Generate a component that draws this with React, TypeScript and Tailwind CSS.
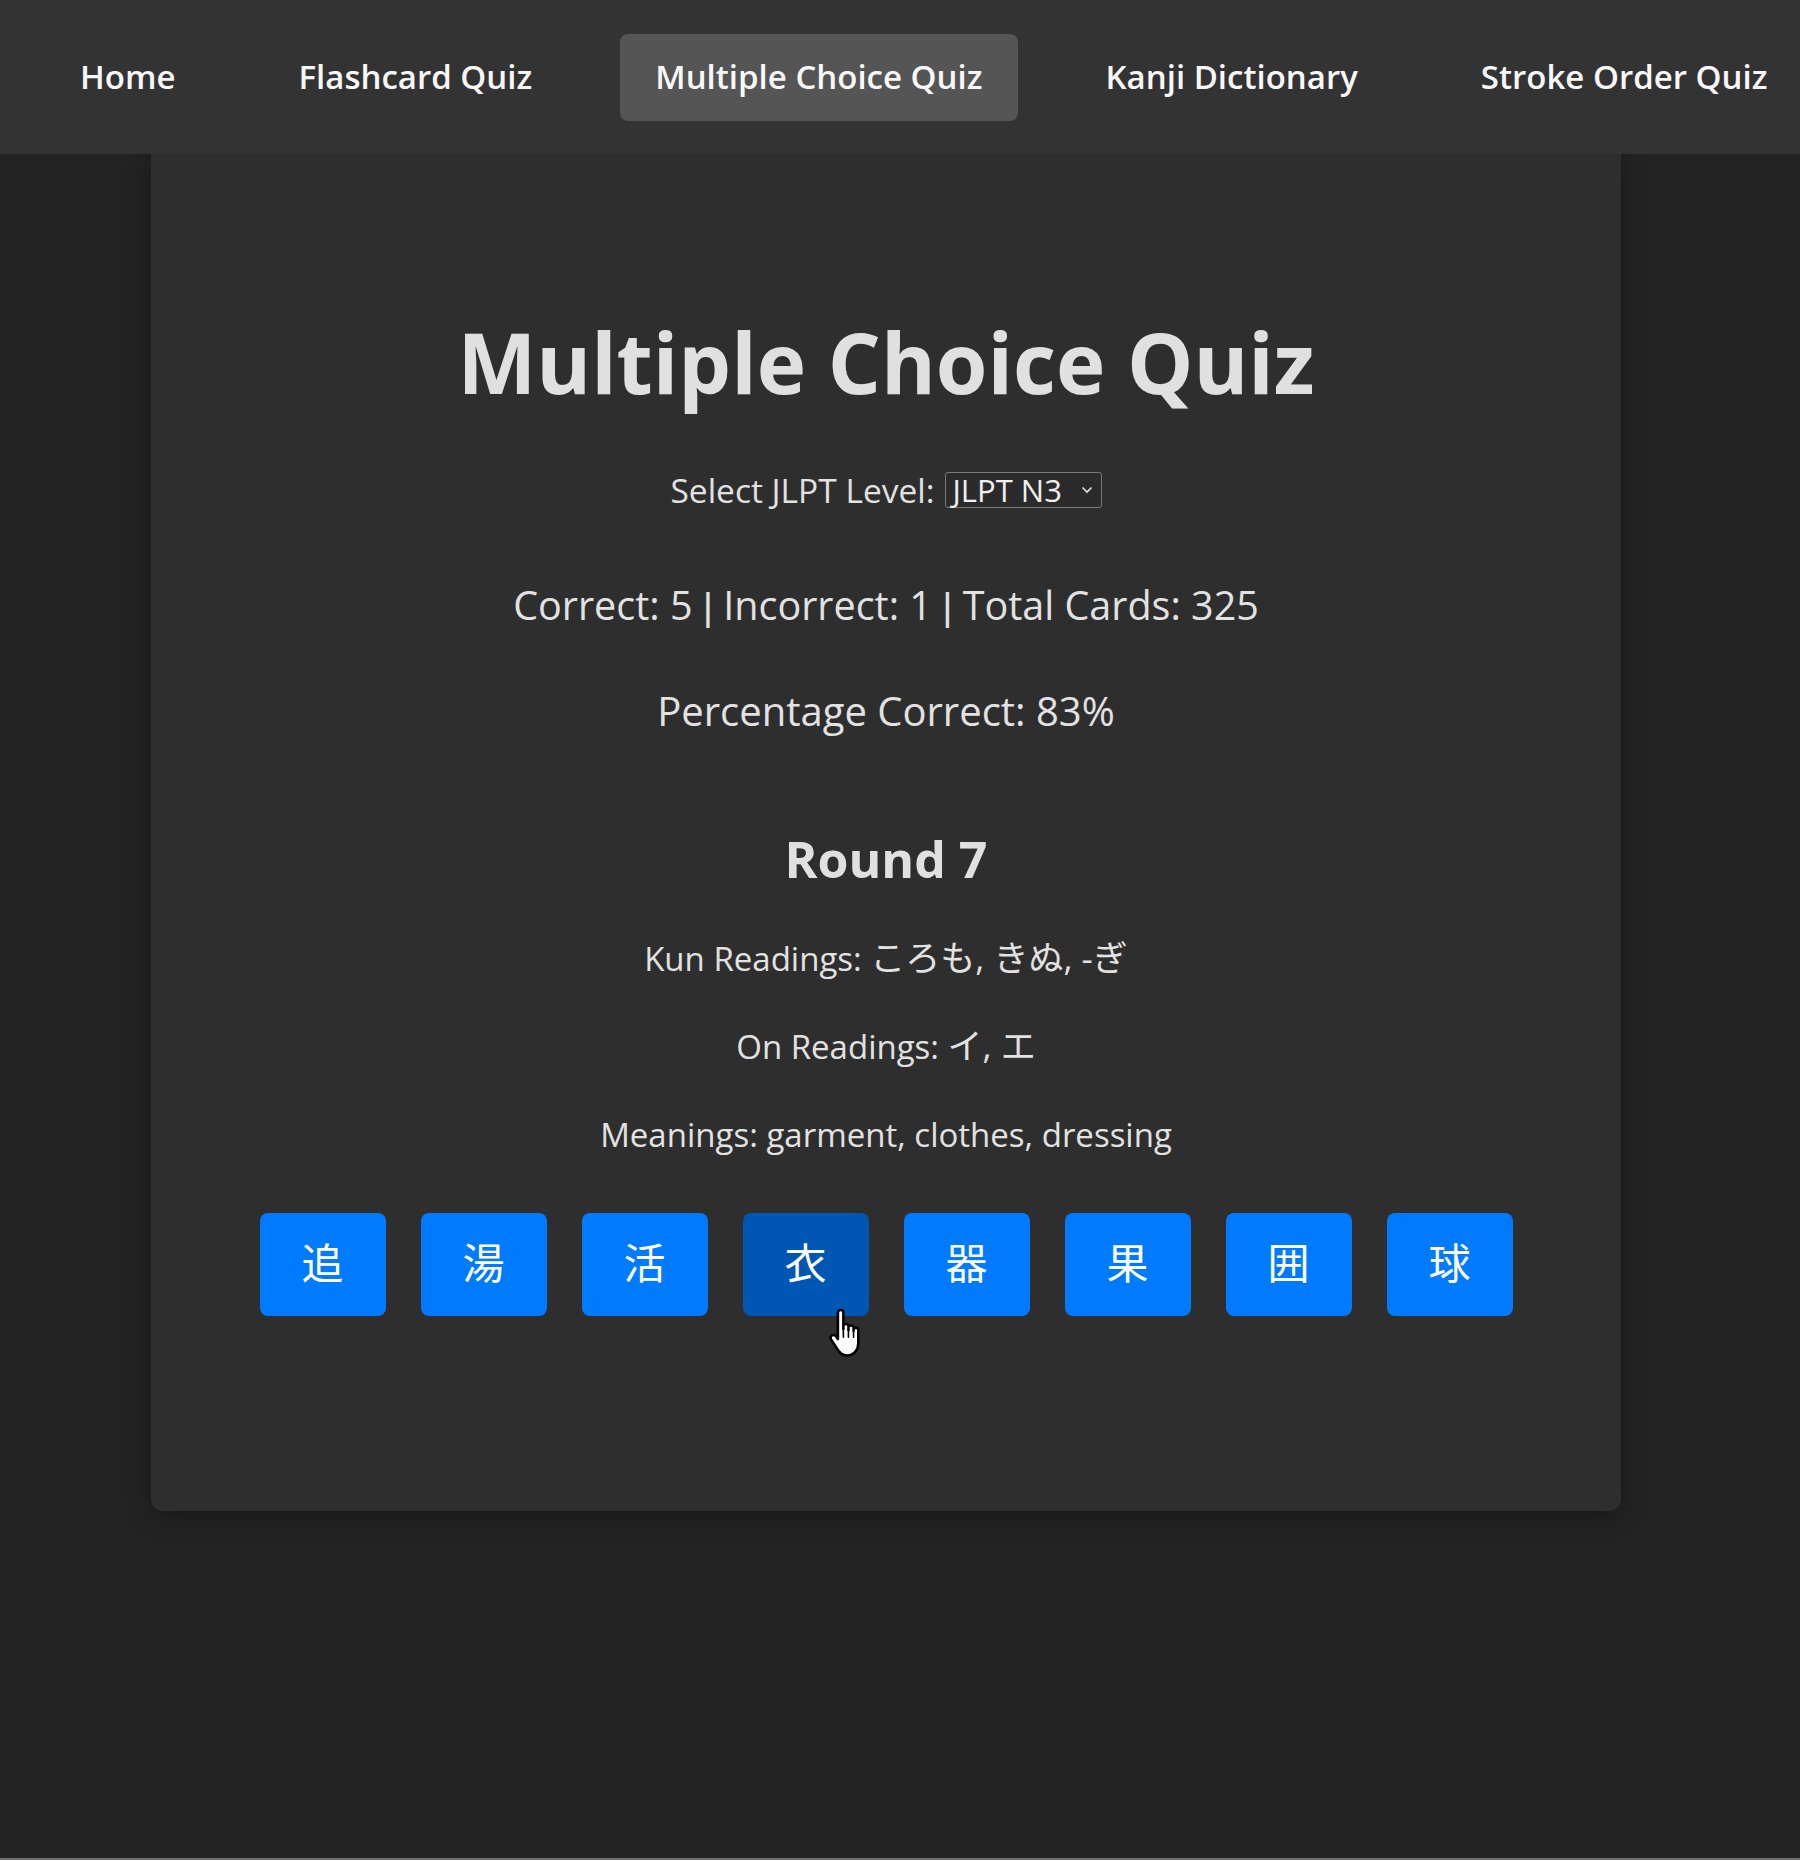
import React from 'react';

const navItems = ['Home', 'Flashcard Quiz', 'Multiple Choice Quiz', 'Kanji Dictionary', 'Stroke Order Quiz'];
const choices = ['追', '湯', '活', '衣', '器', '果', '囲', '球'];

const font = { fontFamily: '"Open Sans", "Noto Sans CJK JP", sans-serif' };
const jp = 'text-[35px] leading-none';

const HandCursor: React.FC = () => (
  <svg width="40" height="55" viewBox="0 0 22 30" className="absolute left-[84px] top-[94px] pointer-events-none">
    <path
      d="M7.5 1.5c.9 0 1.5.7 1.5 1.5V12V10.5c0-.8.6-1.3 1.4-1.3s1.4.5 1.4 1.3V12.5V11.3c0-.8.6-1.3 1.4-1.3s1.4.5 1.4 1.3V13V12.5c0-.8.6-1.2 1.3-1.2s1.3.4 1.3 1.2V20c0 3.5-2.5 6.5-6 6.5H11c-2.5 0-3.8-1.2-5-3L2.3 17.8c-.6-.9-.3-1.9.5-2.3.8-.4 1.7-.1 2.2.6L6 17.5V3c0-.8.7-1.5 1.5-1.5z"
      fill="#ffffff"
      stroke="#000000"
      strokeWidth="1.4"
      strokeLinejoin="round"
    />
    <path d="M9 12v4.5M11.8 12.5v4M14.6 13v3.5" stroke="#000000" strokeWidth="0.9" strokeLinecap="round" />
  </svg>
);

const Bar: React.FC = () => <span style={{ fontFamily: '"Liberation Sans", sans-serif' }}>|</span>;

export default function App() {
  return (
    <div className="min-h-[1860px] bg-[#232323] flex flex-col" style={font}>
      {/* Top nav */}
      <nav className="h-[154px] bg-[#333333] flex items-center pl-[45px] gap-[53px] relative z-10 shrink-0">
        {navItems.map(item => (
          <a
            key={item}
            className={`h-[87px] px-[35px] flex items-center rounded-lg text-[33px] font-semibold text-[#f7f7f7] whitespace-nowrap ${
              item === 'Multiple Choice Quiz' ? 'bg-[#555555]' : ''
            }`}
          >
            {item}
          </a>
        ))}
      </nav>

      {/* Quiz card */}
      <main className="ml-[151px] w-[1470px] bg-[#2e2e2e] rounded-b-xl shadow-[0_4px_24px_rgba(0,0,0,0.35)] flex flex-col items-center pt-[157px] pb-[195px] text-[#e2e2e2]">
        <h1 className="text-[83.5px] leading-[102px] font-bold text-[#e0e0e0]">Multiple Choice Quiz</h1>

        <div className="mt-[59px] h-[36px] flex items-center gap-[10px] text-[33.5px]">
          <span>Select JLPT Level:</span>
          <div className="h-[36px] w-[157px] border border-[#7a7a7a] rounded-[3px] bg-[#2b2b2b] flex items-center justify-between pl-[7px] pr-[8px] text-[31px] text-[#f0f0f0]">
            <span>JLPT N3</span>
            <svg width="12" height="8" viewBox="0 0 12 8">
              <path d="M1.5 1.5l4.5 4.5 4.5-4.5" fill="none" stroke="#e0e0e0" strokeWidth="1.6" />
            </svg>
          </div>
        </div>

        <p className="mt-[73px] text-[39.5px] leading-[48px]">
          Correct: 5 <Bar /> Incorrect: 1 <Bar /> Total Cards: 325
        </p>
        <p className="mt-[57px] text-[40px] leading-[48px]">Percentage Correct: 83%</p>

        <h2 className="mt-[94px] text-[50px] leading-[60px] font-bold text-[#e0e0e0]">Round 7</h2>

        <p className="mt-[50px] text-[33px] leading-[40px]">
          Kun Readings: <span className={jp}>ころも, きぬ, -ぎ</span>
        </p>
        <p className="mt-[48px] text-[33px] leading-[40px]">
          On Readings: <span className={jp}>イ, エ</span>
        </p>
        <p className="mt-[48px] text-[33px] leading-[40px]">Meanings: garment, clothes, dressing</p>

        <div className="mt-[58px] flex gap-[35px]">
          {choices.map(k => (
            <button
              key={k}
              className={`relative w-[126px] h-[103px] rounded-lg text-white text-[42px] flex items-center justify-center pb-[8px] ${
                k === '衣' ? 'bg-[#0056b3]' : 'bg-[#007bff]'
              }`}
              style={{ fontFamily: '"Noto Sans CJK JP", sans-serif' }}
            >
              {k}
              {k === '衣' && <HandCursor />}
            </button>
          ))}
        </div>
      </main>

      <div className="flex-1" />
      <div className="h-[2px] bg-[#707070]" />
    </div>
  );
}
